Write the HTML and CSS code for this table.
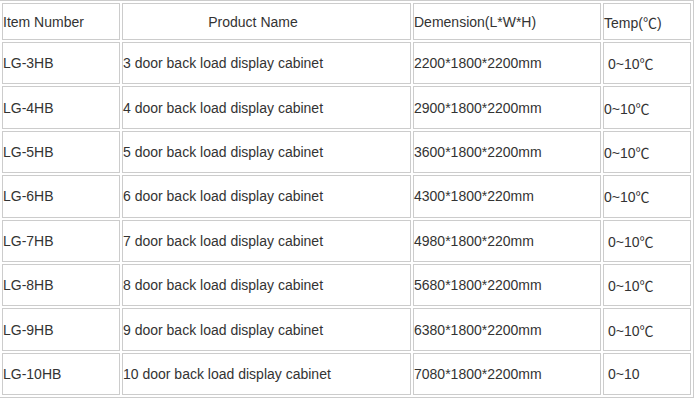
FILE: index.html
```html
<!DOCTYPE html>
<html>
<head>
<meta charset="utf-8">
<link rel="stylesheet" href="styles.css">
</head>
<body>
<table class="spec">
  <tr class="head">
    <td class="c1">Item Number</td>
    <td class="c2 center">Product Name</td>
    <td class="c3">Demension(L*W*H)</td>
    <td class="c4">Temp(℃)</td>
  </tr>
  <tr><td>LG-3HB</td><td>3 door back load display cabinet</td><td>2200*1800*2200mm</td><td class="ind">0~10℃</td></tr>
  <tr><td>LG-4HB</td><td>4 door back load display cabinet</td><td>2900*1800*2200mm</td><td>0~10℃</td></tr>
  <tr><td>LG-5HB</td><td>5 door back load display cabinet</td><td>3600*1800*2200mm</td><td>0~10℃</td></tr>
  <tr><td>LG-6HB</td><td>6 door back load display cabinet</td><td>4300*1800*220mm</td><td>0~10℃</td></tr>
  <tr><td>LG-7HB</td><td>7 door back load display cabinet</td><td>4980*1800*220mm</td><td class="ind">0~10℃</td></tr>
  <tr><td>LG-8HB</td><td>8 door back load display cabinet</td><td>5680*1800*2200mm</td><td class="ind">0~10℃</td></tr>
  <tr><td>LG-9HB</td><td>9 door back load display cabinet</td><td>6380*1800*2200mm</td><td class="ind">0~10℃</td></tr>
  <tr><td>LG-10HB</td><td>10 door back load display cabinet</td><td>7080*1800*2200mm</td><td class="ind">0~10</td></tr>
</table>
</body>
</html>
```

FILE: styles.css
```css
html, body {
  margin: 0;
  padding: 0;
  background: #fff;
}

.spec {
  margin-left: -1px;
  width: 695px;
  table-layout: fixed;
  border: 1px solid #cccccc;
  border-collapse: separate;
  border-spacing: 2px;
  font-family: "Liberation Sans", Arial, "Noto Sans CJK SC", sans-serif;
  font-size: 14px;
  color: #333;
}

.spec td {
  box-sizing: border-box;
  border: 1px solid #cccccc;
  padding: 0;
  height: 42.4px;
  vertical-align: middle;
  text-align: left;
  white-space: nowrap;
}

.spec .head td {
  height: 37px;
}

.spec .c1 { width: 118px; }
.spec .c2 { width: 289px; }
.spec .c3 { width: 188px; }
.spec .c4 { width: 88px; }

.spec .center {
  text-align: center;
  padding-right: 27px;
}

.spec .ind {
  padding-left: 4px;
}
```
